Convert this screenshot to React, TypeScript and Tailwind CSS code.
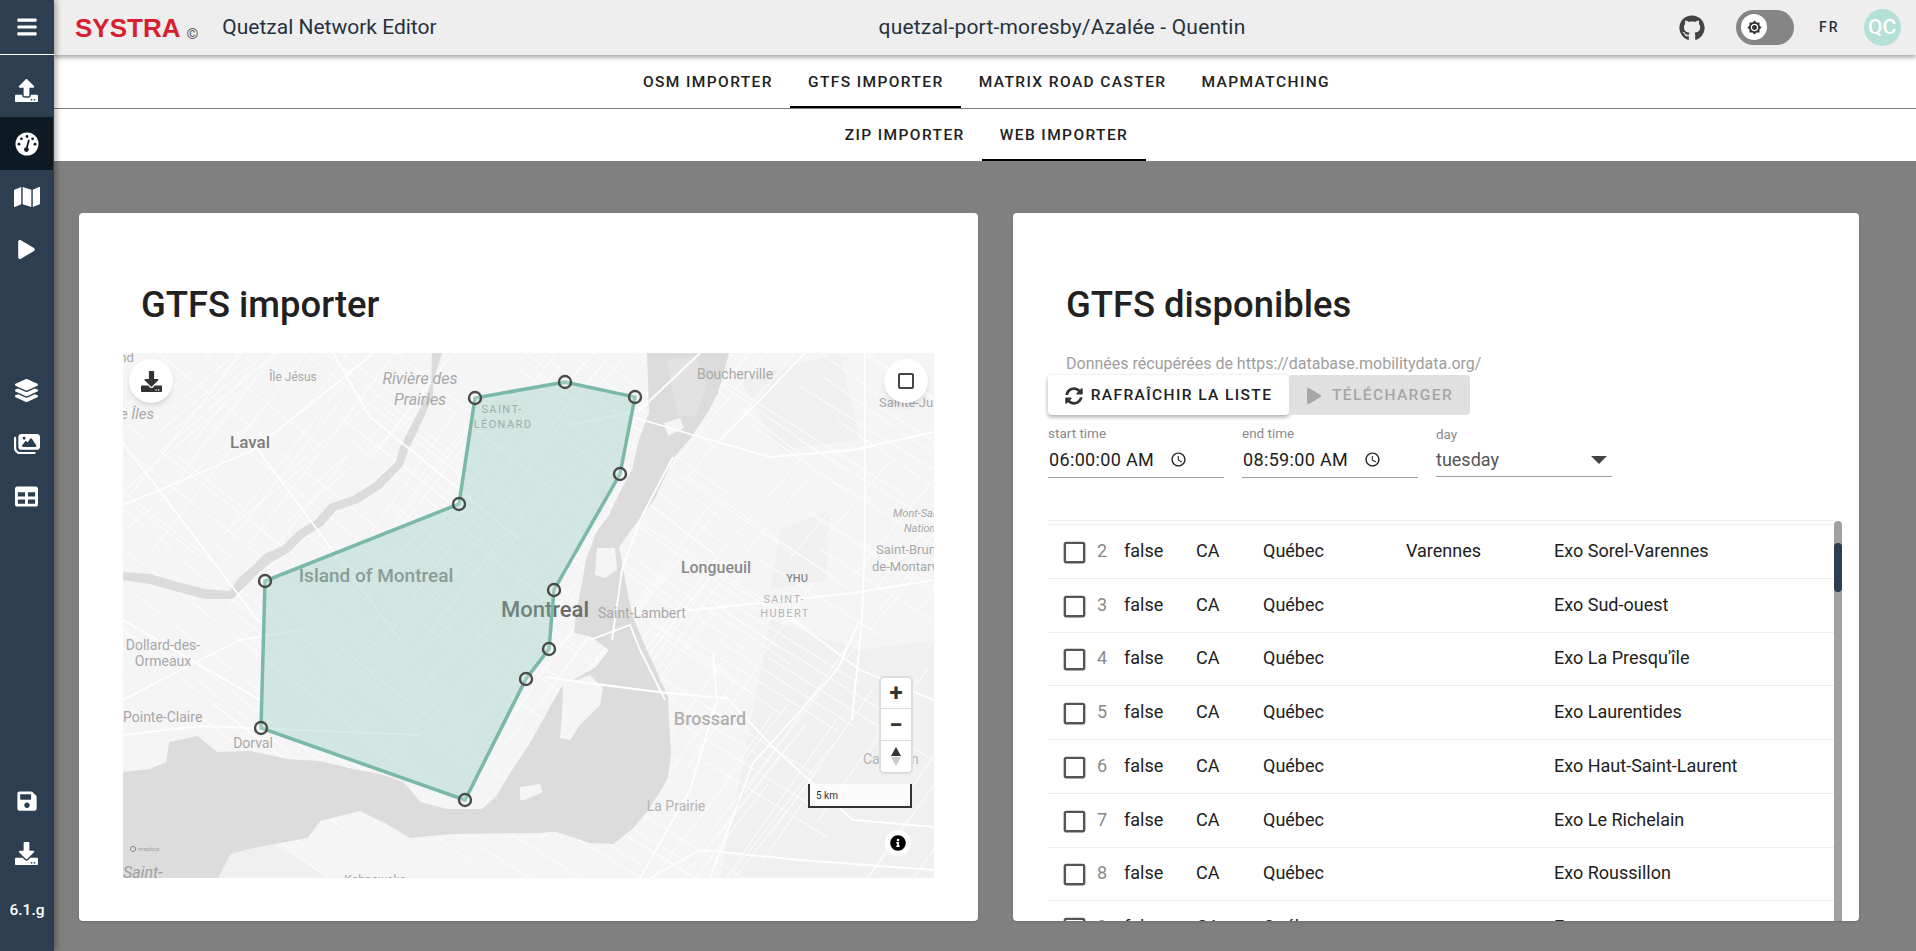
import React from 'react';
import {
  FaBars, FaUpload, FaMap, FaPlay, FaLayerGroup, FaTable,
  FaSave, FaDownload, FaGithub, FaSyncAlt, FaInfoCircle,
} from 'react-icons/fa';
import { FaImages } from 'react-icons/fa6';
import { MdCheckBoxOutlineBlank, MdOutlineAccessTime, MdBrightness7, MdCropSquare } from 'react-icons/md';

const ROBOTO = "font-['Roboto',sans-serif]";

// seeded random so that the street texture is the same on every load
let seed = 11;
const rnd = () => {
  seed = (seed * 16807) % 2147483647;
  return seed / 2147483647;
};

// families of parallel streets, drawn under the water
const streetFamily = (angle: number, spacing: number, cx: number, cy: number, count: number, maxLen: number) => {
  const rad = (angle * Math.PI) / 180;
  const dx = Math.cos(rad);
  const dy = Math.sin(rad);
  const out: string[] = [];
  for (let i = -count; i <= count; i++) {
    const ox = cx - dy * i * spacing + dx * (rnd() - 0.5) * 260;
    const oy = cy + dx * i * spacing + dy * (rnd() - 0.5) * 260;
    const len = maxLen * (0.35 + rnd() * 0.65);
    out.push(`M${(ox - dx * len).toFixed(0)} ${(oy - dy * len).toFixed(0)}L${(ox + dx * len).toFixed(0)} ${(oy + dy * len).toFixed(0)}`);
  }
  return out.join('');
};

const thinStreets = [
  streetFamily(38, 11, 470, 550, 30, 150),
  streetFamily(-52, 13, 470, 550, 28, 140),
  streetFamily(38, 17, 260, 440, 16, 110),
  streetFamily(-40, 19, 260, 440, 16, 110),
  streetFamily(32, 18, 740, 700, 20, 120),
  streetFamily(-55, 20, 740, 700, 18, 120),
  streetFamily(35, 24, 790, 440, 14, 110),
  streetFamily(-50, 26, 790, 440, 14, 110),
].join('');

const mainRoads = [
  'M123 443L260 623',
  'M123 505L160 490L253 450L337 383L373 353',
  'M253 443L327 543L400 640',
  'M333 353L370 417L460 490L520 540',
  'M633 417L700 437L770 457L853 450L934 432',
  'M865 353L865 540L862 620L852 720',
  'M673 457L640 520L622 570L612 640',
  'M663 613L760 603L853 593L934 580',
  'M545 677L587 683L667 693L727 698L773 747L853 820L934 827',
  'M860 620L837 670L753 763L710 878',
  'M713 653L717 700L690 790L640 878',
  'M123 735L200 726L300 730L420 735',
  'M123 700L190 665L240 640L300 630',
  'M123 620L260 700',
  'M700 353L640 410L570 425',
  'M805 353L760 400L720 440',
  'M934 700L860 670L780 610',
  'M650 878L700 850L800 860L934 870',
  'M590 640L630 625L640 650L665 700',
];

const polygon: [number, number][] = [
  [475, 398], [565, 382], [635, 397], [620, 474], [554, 590], [549, 649], [526, 679], [465, 800], [261, 728], [265, 581], [459, 504],
];

const Label = ({ x, y, size, color = '#a8a8a8', weight = 400, anchor = 'middle', italic = false, spacing = 0, children }: {
  x: number; y: number; size: number; color?: string; weight?: number; anchor?: 'start' | 'middle' | 'end'; italic?: boolean; spacing?: number; children: React.ReactNode;
}) => (
  <text x={x} y={y + size * 0.35} fontSize={size} fill={color} fontWeight={weight} textAnchor={anchor} fontStyle={italic ? 'italic' : 'normal'} letterSpacing={spacing} fontFamily="Roboto, sans-serif">
    {children}
  </text>
);

const MapDrawing = () => (
  <svg viewBox="123 353 811 525" width={811} height={525} className="absolute inset-0">
    <rect x={123} y={353} width={811} height={525} fill="#f5f5f6" />
    {/* paler farmland and parks */}
    <path d="M770 620L860 650L934 640L934 878L720 878L740 780Z M740 380L840 353L860 440L780 450Z M780 530L830 510L826 580L770 590Z" fill="#f0f0f1" />
    <path d="M123 780L200 800L330 878L123 878Z" fill="#f0f0f1" />
    <path d={thinStreets} stroke="#ffffff" strokeWidth={0.9} fill="none" />
    {/* rivers and lakes */}
    <g fill="#dcdcdc" stroke="#dcdcdc" strokeWidth={2} strokeLinejoin="round">
      <path d="M648 353L650 413L640 440L633 470L622 490L610 515L597 533L587 560L583 583L577 615L575 632L592 636L610 650L596 668L575 680L562 688L545 718L530 745L512 772L497 797L480 812L500 822L540 826L563 833L590 842L613 843L632 828L647 810L660 790L667 777L670 753L668 720L667 697L655 670L647 653L633 620L628 600L618 547L630 530L653 500L673 457L690 437L705 415L717 393L728 353Z" />
      <path d="M123 878L123 773L150 770L167 763L170 743L197 737L217 753L250 752L287 760L320 762L353 770L380 775L403 783L420 803L447 810L480 810L507 815L540 826L560 830L540 832L453 833L410 837L385 822L360 810L320 820L307 837L253 847L230 853L217 878Z" />
      <path d="M433 353L441 353L428 395L410 430L400 450L397 462L375 483L353 497L330 505L317 520L298 532L283 547L265 555L253 567L240 578L230 592L205 590L177 583L150 575L123 573L123 579L150 583L175 590L205 598L232 598L245 585L258 572L270 562L288 552L303 537L322 525L335 510L358 502L380 488L402 465L408 448L416 432L432 396Z" />
    </g>
    {/* islands in the river */}
    <g fill="#f5f5f6">
      <path d="M563 685L590 675L603 688L600 705L580 725L570 740L560 738L562 715Z" />
      <path d="M597 548L615 548L617 570L605 578L595 575Z" />
      <path d="M520 787L540 784L543 792L525 800L520 800Z" />
      <path d="M664 423L680 418L684 428L668 436Z" />
    </g>
    <path d="M667 360L695 356L707 385L695 417L678 415L672 390Z" fill="#e2e2e2" />
    <path d={mainRoads.join('')} stroke="#ffffff" strokeWidth={1.8} fill="none" />
    {/* labels are part of the base map, so the polygon tints them */}
    <Label x={123} y={357} size={13}>and</Label>
    <Label x={154} y={414} size={15} anchor="end" italic>e Îles</Label>
    <Label x={293} y={377} size={12}>Île Jésus</Label>
    <Label x={420} y={378} size={16} italic>Rivière des</Label>
    <Label x={420} y={399} size={16} italic>Prairies</Label>
    <Label x={502} y={409} size={11} spacing={1.4}>SAINT-</Label>
    <Label x={503} y={424} size={11} spacing={1.4}>LÉONARD</Label>
    <Label x={250} y={442} size={17} weight={500} color="#7d7d7d">Laval</Label>
    <Label x={376} y={575} size={19} weight={500} color="#8f8f8f">Island of Montreal</Label>
    <Label x={545} y={609} size={22} weight={500} color="#6b6b6b">Montreal</Label>
    <Label x={642} y={613} size={14}>Saint-Lambert</Label>
    <Label x={716} y={567} size={16} weight={500} color="#8a8a8a">Longueuil</Label>
    <Label x={797} y={578} size={11} weight={500} color="#8a8a8a">YHU</Label>
    <Label x={784} y={599} size={11} spacing={1.4} color="#b4b4b4">SAINT-</Label>
    <Label x={785} y={613} size={11} spacing={1.4} color="#b4b4b4">HUBERT</Label>
    <Label x={735} y={374} size={14}>Boucherville</Label>
    <Label x={879} y={402} size={13} anchor="start">Sainte-Julie</Label>
    <Label x={893} y={513} size={11} anchor="start" italic>Mont-Saint-</Label>
    <Label x={904} y={528} size={11} anchor="start" italic>National</Label>
    <Label x={876} y={549} size={13} anchor="start">Saint-Bruno-</Label>
    <Label x={872} y={566} size={13} anchor="start">de-Montarville</Label>
    <Label x={163} y={645} size={14}>Dollard-des-</Label>
    <Label x={163} y={661} size={14}>Ormeaux</Label>
    <Label x={123} y={717} size={14} anchor="start">Pointe-Claire</Label>
    <Label x={253} y={743} size={14}>Dorval</Label>
    <Label x={123} y={872} size={16} anchor="start" italic color="#a0a0a0">Saint-</Label>
    <Label x={375} y={880} size={12}>Kahnawake</Label>
    <Label x={710} y={719} size={18} weight={500} color="#b0b0b0">Brossard</Label>
    <Label x={676} y={806} size={14} color="#b4b4b4">La Prairie</Label>
    <Label x={863} y={759} size={14} anchor="start" color="#b4b4b4">Carignan</Label>
    {/* mapbox mark */}
    <circle cx={133} cy={849} r={2.6} fill="none" stroke="#8a8a8a" strokeWidth={1} />
    <text x={138} y={851} fontSize={6} fill="#a0a0a0" fontFamily="Roboto, sans-serif">mapbox</text>
    {/* selected zone */}
    <polygon
      points={polygon.map((p) => p.join(',')).join(' ')}
      fill="#7fc0b0"
      fillOpacity={0.3}
      stroke="#7ab9a9"
      strokeWidth={3.5}
    />
    {polygon.map((p) => (
      <circle key={p.join()} cx={p[0]} cy={p[1]} r={6} fill="#ffffff" fillOpacity={0.25} stroke="#4a4a4a" strokeWidth={2.4} />
    ))}
  </svg>
);

// round gauge of the sidebar: the icon packs only have the dome version
const GaugeIcon = () => (
  <svg viewBox="0 0 24 24" width={24} height={24}>
    <circle cx={12} cy={12} r={11.5} fill="#ffffff" />
    <g fill="#0d1a24">
      <circle cx={12} cy={4.5} r={1.4} />
      <circle cx={6.4} cy={6.8} r={1.4} />
      <circle cx={17.6} cy={6.8} r={1.4} />
      <circle cx={4} cy={12.2} r={1.4} />
      <circle cx={20} cy={12.2} r={1.4} />
      <circle cx={11.4} cy={17.6} r={2.4} />
    </g>
    <path d="M11.4 17.6L13.8 8.4" stroke="#0d1a24" strokeWidth={1.8} strokeLinecap="round" />
  </svg>
);

const NavItem = ({ icon, active = false }: { icon: React.ReactNode; active?: boolean }) => (
  <div className={`flex h-[53px] w-[53px] items-center justify-center text-white ${active ? 'bg-[#0d1a24]' : ''}`}>
    {icon}
  </div>
);

const Tab = ({ label, active = false }: { label: string; active?: boolean }) => (
  <div className={`flex h-full items-center px-[17.5px] pt-[4px] text-[15.5px] font-medium tracking-[1.4px] text-[#212121] ${active ? 'border-b-2 border-black' : 'border-b-2 border-transparent'}`}>
    {label}
  </div>
);

const TimeField = ({ label, value }: { label: string; value: string }) => (
  <div className="w-[176px]">
    <div className="h-[18px] text-[13.5px] leading-[18px] text-[#8a8a8a]">{label}</div>
    <div className="flex h-[36px] items-center border-b border-[#9e9e9e] pl-px text-[18px] tracking-[0.35px] text-[#212121]">
      <span className="w-[121px] whitespace-nowrap">{value}</span>
      <MdOutlineAccessTime size={17} className="text-[#212121]" />
    </div>
  </div>
);

const rows = [
  { n: 2, city: 'Varennes', name: 'Exo Sorel-Varennes' },
  { n: 3, city: '', name: 'Exo Sud-ouest' },
  { n: 4, city: '', name: "Exo La Presqu'île" },
  { n: 5, city: '', name: 'Exo Laurentides' },
  { n: 6, city: '', name: 'Exo Haut-Saint-Laurent' },
  { n: 7, city: '', name: 'Exo Le Richelain' },
  { n: 8, city: '', name: 'Exo Roussillon' },
  { n: 9, city: '', name: 'Exo' },
];

export default function App() {
  return (
    <div className={`flex h-[951px] w-[1916px] overflow-hidden bg-[#808080] ${ROBOTO}`}>
      {/* Barre latérale */}
      <aside className="z-20 flex h-full w-[54px] shrink-0 flex-col bg-[#2c3e50] shadow-[2px_0_6px_rgba(0,0,0,0.35)]">
        <div className="flex h-[55px] items-center justify-center border-b border-white text-white">
          <FaBars size={22} />
        </div>
        <div className="mt-[9px]">
          <NavItem icon={<FaUpload size={23} />} />
          <NavItem active icon={<GaugeIcon />} />
          <NavItem icon={<FaMap size={26} />} />
          <NavItem icon={<FaPlay size={19} />} />
        </div>
        <div className="mt-[88px]">
          <NavItem icon={<FaLayerGroup size={23} />} />
          <NavItem icon={<FaImages size={26} />} />
          <NavItem icon={<FaTable size={23} />} />
        </div>
        <div className="mt-auto">
          <NavItem icon={<FaSave size={22} />} />
          <NavItem icon={<FaDownload size={23} />} />
          <div className="flex h-[60px] items-start justify-center pt-[19px] text-[15.5px] font-medium text-white">6.1.g</div>
          <div className="h-[11px]" />
        </div>
      </aside>

      <div className="flex min-w-0 flex-1 flex-col">
        {/* En-tête */}
        <header className="z-10 flex h-[55px] shrink-0 items-center bg-[#eeeeee] shadow-[0_2px_5px_rgba(0,0,0,0.4)]">
          <div className="flex w-[402px] items-center pl-[21px]">
            <span className="text-[26px] font-bold leading-none text-[#d81f30] font-['Liberation_Sans',sans-serif]">SYSTRA</span>
            <span className="ml-[6px] mt-[14px] text-[15px] leading-none text-[#555555]">©</span>
            <span className="ml-[24px] mt-px whitespace-nowrap text-[21px] text-[#27323f]">Quetzal Network Editor</span>
          </div>
          <div className="mt-px flex-1 text-center text-[21px] tracking-[0.2px] text-[#27323f]">quetzal-port-moresby/Azalée - Quentin</div>
          <div className="flex w-[248px] items-center">
            <FaGithub size={26} className="ml-[11px] text-[#444444]" />
            <div className="relative ml-[31px] h-[35px] w-[58px] rounded-full bg-[#858585]">
              <div className="absolute left-[5px] top-[4px] flex h-[26px] w-[26px] items-center justify-center rounded-full bg-white">
                <MdBrightness7 size={15} className="text-[#333333]" />
              </div>
            </div>
            <span className="ml-[25px] text-[14px] font-medium tracking-[2px] text-[#27323f]">FR</span>
            <div className="ml-[24px] flex h-[37px] w-[37px] items-center justify-center rounded-full bg-[#b5e0d5] text-[21px] font-medium text-white">QC</div>
          </div>
        </header>

        {/* Onglets */}
        <nav className="flex h-[54px] shrink-0 items-stretch justify-center border-b border-[#808080] bg-white pl-[3px]">
          <Tab label="OSM IMPORTER" />
          <Tab label="GTFS IMPORTER" active />
          <Tab label="MATRIX ROAD CASTER" />
          <Tab label="MAPMATCHING" />
        </nav>
        <nav className="flex h-[52px] shrink-0 items-stretch justify-center bg-white pl-[3px]">
          <Tab label="ZIP IMPORTER" />
          <Tab label="WEB IMPORTER" active />
        </nav>

        {/* Contenu */}
        <main className="flex flex-1 gap-[35px] overflow-hidden pl-[25px] pt-[52px]">
          <section className="h-[708px] w-[899px] shrink-0 rounded bg-white pl-[44px] pt-[72px] shadow">
            <h1 className="h-[40px] pl-[18px] text-[36.4px] font-medium leading-[40px] text-[#212121]">GTFS importer</h1>
            <div className="relative mt-[28px] h-[525px] w-[811px] overflow-hidden">
              <MapDrawing />
              <div className="absolute left-[6px] top-[6px] flex h-[44px] w-[44px] items-center justify-center rounded-full bg-white text-[#333333] shadow-md">
                <FaDownload size={21} />
              </div>
              <div className="absolute left-[761px] top-[6px] flex h-[44px] w-[44px] items-center justify-center rounded-full bg-white text-[#444444] shadow-md">
                <MdCropSquare size={24} />
              </div>
              <div className="absolute left-[756px] top-[323px] w-[34px] overflow-hidden rounded-[5px] border-2 border-[#dddddd] bg-white text-[#333333]">
                <div className="flex h-[31px] items-center justify-center border-b border-[#dddddd] text-[24px] font-bold leading-none">+</div>
                <div className="flex h-[32px] items-center justify-center border-b border-[#dddddd] text-[24px] font-bold leading-none">−</div>
                <div className="flex h-[31px] flex-col items-center justify-center gap-[1px]">
                  <div className="h-0 w-0 border-x-[5px] border-b-[9px] border-x-transparent border-b-[#333333]" />
                  <div className="h-0 w-0 border-x-[5px] border-t-[9px] border-x-transparent border-t-[#cccccc]" />
                </div>
              </div>
              <div className="absolute left-[685px] top-[431px] flex h-[24px] w-[104px] items-center border-x-2 border-b-2 border-[#333333] bg-white/75 pl-[6px] text-[10px] text-[#333333]">5 km</div>
              <div className="absolute left-[762px] top-[477px] flex h-[26px] w-[26px] items-center justify-center rounded-full bg-white text-black">
                <FaInfoCircle size={16} />
              </div>
            </div>
          </section>

          <section className="flex h-[708px] w-[846px] shrink-0 flex-col overflow-hidden rounded bg-white pl-[35px] pt-[72px] shadow">
            <h1 className="h-[40px] pl-[18px] text-[36.4px] font-medium leading-[40px] text-[#212121]">GTFS disponibles</h1>
            <p className="mt-[29px] h-[20px] pl-[18px] text-[16px] leading-[20px] text-[#9e9e9e]">Données récupérées de https://database.mobilitydata.org/</p>
            <div className="mt-px flex h-[40px]">
              <button className="flex w-[241px] items-center justify-center gap-[8px] rounded bg-white pt-px text-[15.5px] font-medium tracking-[1.4px] text-[#212121] shadow-[0_2px_4px_rgba(0,0,0,0.35)]">
                <FaSyncAlt size={18} className="text-[#333333]" />
                RAFRAÎCHIR LA LISTE
              </button>
              <button className="flex w-[181px] items-center justify-center gap-[10px] rounded bg-[#e0e0e0] pt-px text-[15.5px] font-medium tracking-[1.4px] text-[#a6a6a6]">
                <FaPlay size={16} />
                TÉLÉCHARGER
              </button>
            </div>
            <div className="mt-[9px] flex gap-[18px]">
              <TimeField label="start time" value="06:00:00 AM" />
              <TimeField label="end time" value="08:59:00 AM" />
              <div className="w-[176px]">
                <div className="h-[19px] text-[13.5px] leading-[20px] text-[#8a8a8a]">day</div>
                <div className="flex h-[34px] items-center justify-between border-b border-[#9e9e9e] pr-[5px] text-[18px] text-[#555555]">
                  <span>tuesday</span>
                  <div className="h-0 w-0 border-x-[8px] border-t-[8px] border-x-transparent border-t-[#444444]" />
                </div>
              </div>
            </div>

            {/* Liste des GTFS */}
            <div className="mt-[42px] flex min-h-0 flex-1 pr-[17px]">
              <div className="min-w-0 flex-1 overflow-hidden">
                <div className="h-[4px] border-t border-[#eeeeee]" />
                {rows.map((r) => (
                  <div key={r.n} className="flex h-[53.75px] shrink-0 items-center border-t border-[#eeeeee] pb-[2px] text-[18px] text-[#212121]">
                    <MdCheckBoxOutlineBlank size={29} className="ml-[12px] mt-[4px] shrink-0 text-[#555555]" />
                    <span className="ml-[8px] w-[27px] shrink-0 text-[#8a8a8a]">{r.n}</span>
                    <span className="w-[72px] shrink-0">false</span>
                    <span className="w-[67px] shrink-0">CA</span>
                    <span className="w-[143px] shrink-0">Québec</span>
                    <span className="w-[148px] shrink-0">{r.city}</span>
                    <span className="whitespace-nowrap">{r.name}</span>
                  </div>
                ))}
              </div>
              <div className="relative mt-px w-[8px] shrink-0 rounded-t-full bg-[#a0a0a0]">
                <div className="absolute left-0 top-[22px] h-[49px] w-[8px] rounded-full bg-[#2c3e50]" />
              </div>
            </div>
          </section>
        </main>
      </div>
    </div>
  );
}
